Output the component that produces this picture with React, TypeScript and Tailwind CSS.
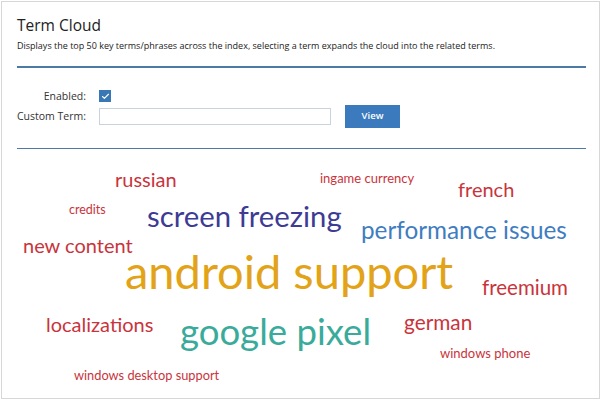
import { Check } from 'lucide-react';

type Word = { text: string; x: number; base: number; size: number; color: string };

const RED = '#c9343c';

// x = left edge on the page, base = baseline on the page
const words: Word[] = [
  { text: 'russian', x: 115, base: 187, size: 20, color: RED },
  { text: 'ingame currency', x: 320, base: 184, size: 13, color: RED },
  { text: 'french', x: 458, base: 197, size: 20, color: RED },
  { text: 'credits', x: 69, base: 215, size: 12.5, color: RED },
  { text: 'screen freezing', x: 147, base: 227, size: 29.3, color: '#3d3b94' },
  { text: 'performance issues', x: 361, base: 240, size: 24.3, color: '#3f7dc0' },
  { text: 'new content', x: 23, base: 253, size: 20, color: RED },
  { text: 'android support', x: 125, base: 290, size: 47, color: '#e2a318' },
  { text: 'freemium', x: 482, base: 295, size: 20.5, color: RED },
  { text: 'localizations', x: 46, base: 332, size: 20, color: RED },
  { text: 'google pixel', x: 180, base: 345, size: 36.6, color: '#3aab9b' },
  { text: 'german', x: 404, base: 330, size: 20.8, color: RED },
  { text: 'windows phone', x: 440, base: 359, size: 13, color: RED },
  { text: 'windows desktop support', x: 74, base: 380, size: 12.8, color: RED },
];

// cloud box origin on the page
const CLOUD_X = 17;
const CLOUD_Y = 149;

export default function App() {
  return (
    <div className="w-[604px] h-[403px] bg-white pl-[1px] pt-[1px] font-['Open_Sans',sans-serif] text-[#333]">
      <div className="w-[599px] h-[398px] border border-[#d7d7d7] pl-[15px] pr-[13px] pt-[13px] flex flex-col">
        {/* Header */}
        <h1 className="text-[15.5px] leading-[20px] text-[#222]">Term Cloud</h1>
        <p className="mt-[5px] text-[9px] leading-[12px] text-[#222] whitespace-nowrap">
          Displays the top 50 key terms/phrases across the index, selecting a term expands the cloud into the related terms.
        </p>
        <div className="mt-[14px] h-[2px] bg-[#4b7aa6]" />

        {/* Form */}
        <div className="mt-[21px] grid grid-cols-[69px_auto] gap-x-[13px] gap-y-[2px] items-center text-[10.5px]">
          <label className="text-right leading-[14px]">Enabled:</label>
          <div className="h-[14px] flex items-center">
            <div className="w-[12px] h-[12px] bg-[#3a77b5] flex items-center justify-center">
              <Check className="w-[9px] h-[9px] text-white" strokeWidth={3} />
            </div>
          </div>
          <label className="leading-[23px] whitespace-nowrap">Custom Term:</label>
          <div className="flex items-center">
            <input
              type="text"
              className="w-[232px] h-[17px] border border-[#c9d3dd] bg-white outline-none"
            />
            <button className="ml-[14px] w-[55px] h-[23px] bg-[#3b7bbd] text-white text-[9.5px] font-semibold">
              View
            </button>
          </div>
        </div>
        <div className="mt-[20px] h-[1px] bg-[#4b7aa6]" />

        {/* Cloud */}
        <div className="relative flex-1 font-['Lato',sans-serif]">
          {words.map((w) => (
            <span
              key={w.text}
              className="absolute whitespace-nowrap leading-none cursor-pointer"
              style={{
                left: w.x - CLOUD_X,
                top: w.base - 0.887 * w.size - CLOUD_Y,
                fontSize: w.size,
                color: w.color,
              }}
            >
              {w.text}
            </span>
          ))}
        </div>
      </div>
    </div>
  );
}
